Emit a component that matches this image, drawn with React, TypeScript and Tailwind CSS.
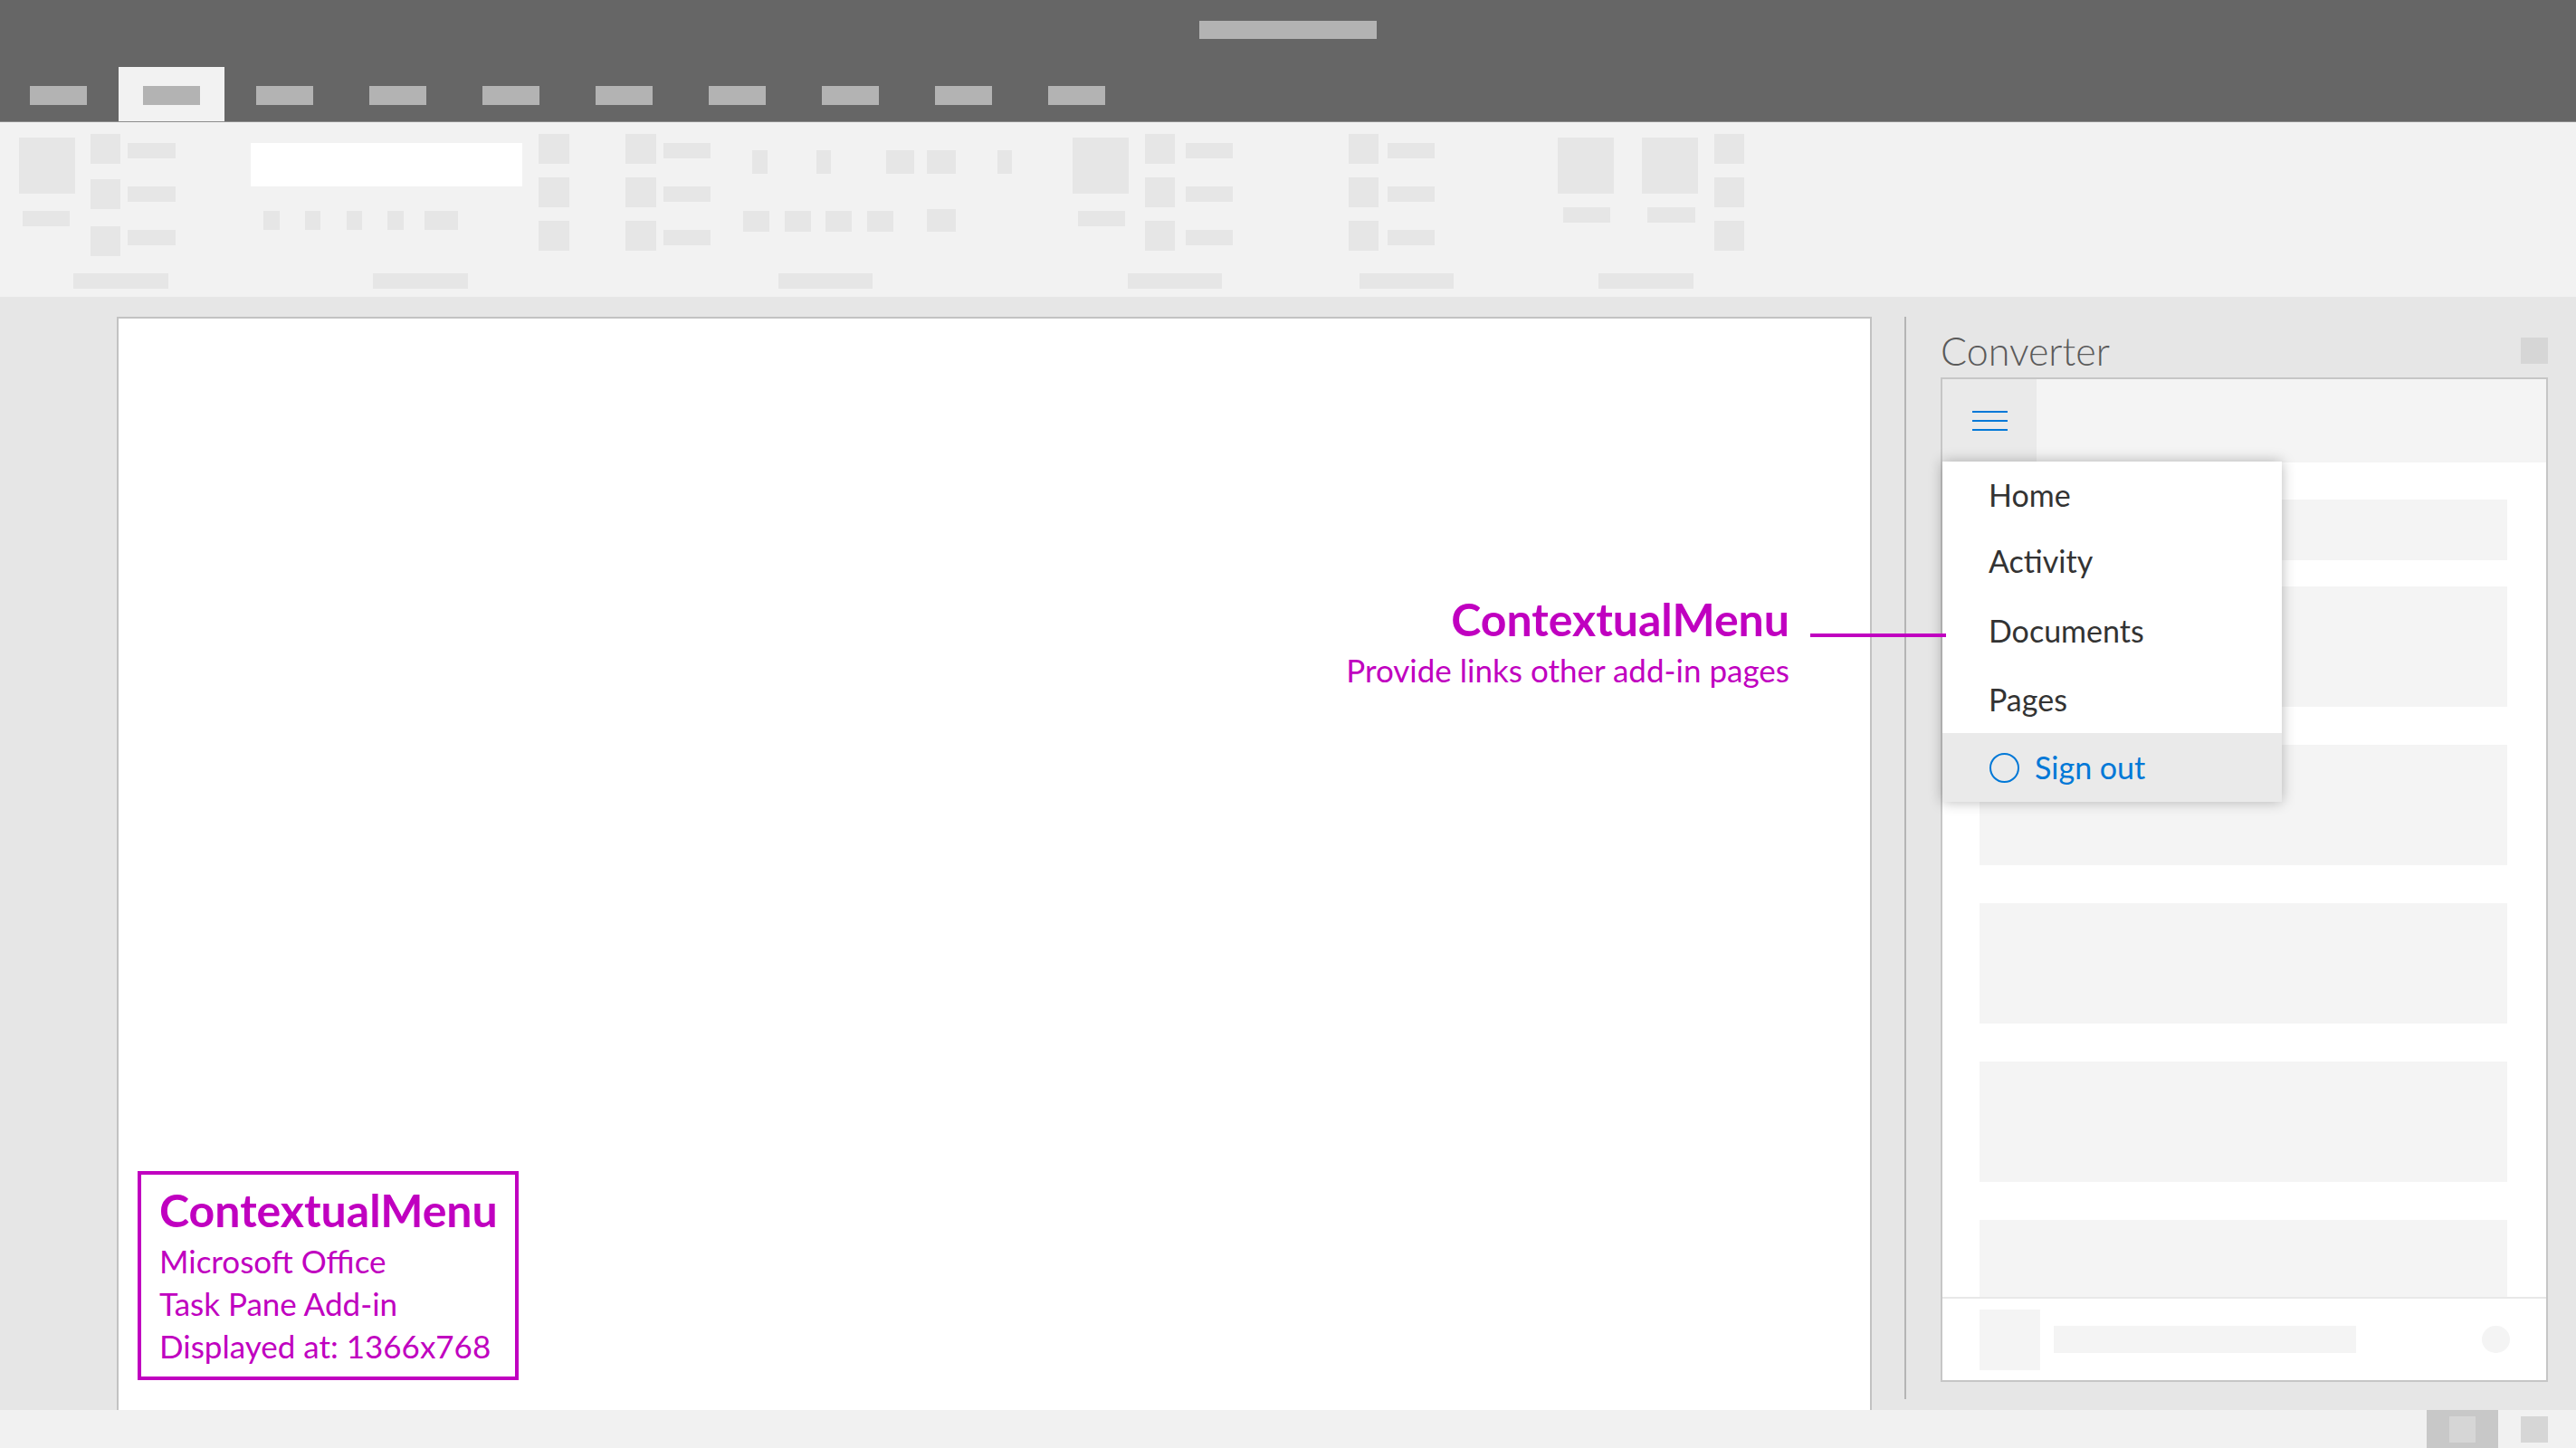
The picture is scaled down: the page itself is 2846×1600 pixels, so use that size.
const ph = "bg-[#e6e6e6]";

function TitleBar() {
  const tabs = [0, 1, 2, 3, 4, 5, 6, 7, 8, 9];
  return (
    <div className="h-[135px] bg-[#666666] border-b border-[#8c8c8c] flex flex-col">
      <div className="h-[74px] flex justify-center pt-[23px]">
        <div className="h-[20px] w-[196px] bg-[#b3b3b3]" />
      </div>
      <div className="flex pl-[2px] h-[60px]">
        {tabs.map((t) =>
          t === 1 ? (
            <div key={t} className="w-[125px] flex justify-center">
              <div className="w-[117px] h-full bg-[#f2f2f2] flex justify-center pt-[21px]">
                <div className="h-[21px] w-[63px] bg-[#b3b3b3]" />
              </div>
            </div>
          ) : (
            <div key={t} className="w-[125px] flex justify-center pt-[21px]">
              <div className="h-[21px] w-[63px] bg-[#b3b3b3]" />
            </div>
          )
        )}
      </div>
    </div>
  );
}

function Ribbon() {
  return (
    <div className="h-[193px] bg-[#f2f2f2] flex flex-col">
      <div className="h-[148px] flex items-start pt-[13px]">
        {/* group 1 */}
        <div className="ml-[21px] w-[62px] flex flex-col">
          <div className={`mt-[4px] h-[62px] w-[62px] ${ph}`} />
          <div className={`ml-[4px] mt-[19px] h-[17px] w-[52px] ${ph}`} />
        </div>
        <div className="ml-[17px] w-[33px] flex flex-col">
          <div className={`h-[33px] ${ph}`} />
          <div className={`mt-[17px] h-[33px] ${ph}`} />
          <div className={`mt-[19px] h-[33px] ${ph}`} />
        </div>
        <div className="ml-[8px] w-[53px] flex flex-col">
          <div className={`mt-[10px] h-[17px] ${ph}`} />
          <div className={`mt-[31px] h-[17px] ${ph}`} />
          <div className={`mt-[31px] h-[17px] ${ph}`} />
        </div>
        {/* group 2 */}
        <div className="ml-[83px] w-[300px] flex flex-col">
          <div className="mt-[10px] h-[48px] bg-white" />
          <div className="mt-[27px] flex">
            <div className={`ml-[14px] h-[21px] w-[18px] ${ph}`} />
            <div className={`ml-[28px] h-[21px] w-[17px] ${ph}`} />
            <div className={`ml-[29px] h-[21px] w-[17px] ${ph}`} />
            <div className={`ml-[28px] h-[21px] w-[18px] ${ph}`} />
            <div className={`ml-[23px] h-[21px] w-[37px] ${ph}`} />
          </div>
        </div>
        <div className="ml-[18px] w-[34px] flex flex-col gap-[15px]">
          <div className={`h-[33px] ${ph}`} />
          <div className={`h-[33px] ${ph}`} />
          <div className={`h-[33px] ${ph}`} />
        </div>
        {/* group 3 */}
        <div className="ml-[62px] w-[34px] flex flex-col gap-[15px]">
          <div className={`h-[33px] ${ph}`} />
          <div className={`h-[33px] ${ph}`} />
          <div className={`h-[33px] ${ph}`} />
        </div>
        <div className="ml-[8px] w-[52px] flex flex-col gap-[31px] pt-[10px]">
          <div className={`h-[17px] ${ph}`} />
          <div className={`h-[17px] ${ph}`} />
          <div className={`h-[17px] ${ph}`} />
        </div>
        <div className="ml-[36px] flex flex-col">
          <div className="mt-[18px] flex">
            <div className={`ml-[10px] h-[26px] w-[17px] ${ph}`} />
            <div className={`ml-[54px] h-[26px] w-[16px] ${ph}`} />
            <div className={`ml-[61px] h-[26px] w-[31px] ${ph}`} />
            <div className={`ml-[14px] h-[26px] w-[32px] ${ph}`} />
            <div className={`ml-[46px] h-[26px] w-[16px] ${ph}`} />
          </div>
          <div className="mt-[39px] flex items-start">
            <div className={`mt-[2px] h-[23px] w-[29px] ${ph}`} />
            <div className={`ml-[17px] mt-[2px] h-[23px] w-[29px] ${ph}`} />
            <div className={`ml-[16px] mt-[2px] h-[23px] w-[29px] ${ph}`} />
            <div className={`ml-[17px] mt-[2px] h-[23px] w-[29px] ${ph}`} />
            <div className={`ml-[37px] h-[25px] w-[32px] ${ph}`} />
          </div>
        </div>
        {/* group 4 */}
        <div className="ml-[67px] w-[62px] flex flex-col">
          <div className={`mt-[4px] h-[62px] w-[62px] ${ph}`} />
          <div className={`ml-[6px] mt-[19px] h-[17px] w-[52px] ${ph}`} />
        </div>
        <div className="ml-[18px] w-[33px] flex flex-col gap-[15px]">
          <div className={`h-[33px] ${ph}`} />
          <div className={`h-[33px] ${ph}`} />
          <div className={`h-[33px] ${ph}`} />
        </div>
        <div className="ml-[12px] w-[52px] flex flex-col gap-[31px] pt-[10px]">
          <div className={`h-[17px] ${ph}`} />
          <div className={`h-[17px] ${ph}`} />
          <div className={`h-[17px] ${ph}`} />
        </div>
        {/* group 5 */}
        <div className="ml-[128px] w-[33px] flex flex-col gap-[15px]">
          <div className={`h-[33px] ${ph}`} />
          <div className={`h-[33px] ${ph}`} />
          <div className={`h-[33px] ${ph}`} />
        </div>
        <div className="ml-[10px] w-[52px] flex flex-col gap-[31px] pt-[10px]">
          <div className={`h-[17px] ${ph}`} />
          <div className={`h-[17px] ${ph}`} />
          <div className={`h-[17px] ${ph}`} />
        </div>
        {/* group 6 */}
        <div className="ml-[136px] w-[62px] flex flex-col">
          <div className={`mt-[4px] h-[62px] w-[62px] ${ph}`} />
          <div className={`ml-[6px] mt-[15px] h-[17px] w-[52px] ${ph}`} />
        </div>
        <div className="ml-[31px] w-[62px] flex flex-col">
          <div className={`mt-[4px] h-[62px] w-[62px] ${ph}`} />
          <div className={`ml-[6px] mt-[15px] h-[17px] w-[53px] ${ph}`} />
        </div>
        <div className="ml-[18px] w-[33px] flex flex-col gap-[15px]">
          <div className={`h-[33px] ${ph}`} />
          <div className={`h-[33px] ${ph}`} />
          <div className={`h-[33px] ${ph}`} />
        </div>
      </div>
      <div className="mt-[19px] flex">
        <div className={`ml-[81px] h-[17px] w-[105px] ${ph}`} />
        <div className={`ml-[226px] h-[17px] w-[105px] ${ph}`} />
        <div className={`ml-[343px] h-[17px] w-[104px] ${ph}`} />
        <div className={`ml-[282px] h-[17px] w-[104px] ${ph}`} />
        <div className={`ml-[152px] h-[17px] w-[104px] ${ph}`} />
        <div className={`ml-[160px] h-[17px] w-[105px] ${ph}`} />
      </div>
    </div>
  );
}

function Page() {
  return (
    <div className="ml-[129px] mt-[22px] w-[1939px] border-2 border-b-0 border-[#c2c2c2] bg-white flex flex-col text-[#c000c0]">
      <div className="self-end mr-[89px] pt-[307px] flex flex-col items-end">
        <div className="text-[50px] leading-[50px] font-bold">ContextualMenu</div>
        <div className="mt-[14px] text-[35px] leading-[35px]">Provide links other add-in pages</div>
      </div>
      <div className="mt-auto mb-[33px] ml-[21px] w-[421px] h-[231px] border-4 border-[#c000c0] pl-[20px] pt-[14px]">
        <div className="text-[50px] leading-[50px] font-bold">ContextualMenu</div>
        <div className="mt-[8px] text-[35px] leading-[47px]">
          <div>Microsoft Office</div>
          <div>Task Pane Add-in</div>
          <div>Displayed at: 1366x768</div>
        </div>
      </div>
    </div>
  );
}

function ContextMenu() {
  const items = [
    { label: "Home", h: "h-[73px]" },
    { label: "Activity", h: "h-[74px]" },
    { label: "Documents", h: "h-[79px]" },
    { label: "Pages", h: "h-[74px]" },
  ];
  return (
    <div className="absolute left-0 top-[91px] w-[375px] bg-white shadow-[0_0_14px_rgba(0,0,0,0.28)] flex flex-col text-[34px] leading-none">
      {items.map((it) => (
        <div key={it.label} className={`${it.h} flex items-center pl-[51px] text-[#333333]`}>
          {it.label}
        </div>
      ))}
      <div className="h-[76px] flex items-center pl-[52px] bg-[#eaeaea] text-[#0078d7]">
        <div className="w-[33px] h-[33px] rounded-full border-2 border-[#0078d7]" />
        <span className="ml-[17px]">Sign out</span>
      </div>
    </div>
  );
}

function TaskPane() {
  return (
    <div className="ml-[38px] w-[671px] flex flex-col">
      <div className="h-[89px] flex items-start justify-between">
        <div className="mt-[38px] text-[43px] leading-none font-light text-[#5a5a5a]">Converter</div>
        <div className="mt-[45px] w-[30px] h-[29px] bg-[#d6d6d6]" />
      </div>
      <div className="relative h-[1110px] border-2 border-[#c6c6c6] bg-white flex flex-col">
        <div className="h-[92px] bg-[#f4f4f4] flex">
          <div className="w-[104px] h-full bg-[#eaeaea] flex flex-col items-center justify-center gap-[8px]">
            <div className="w-[39px] h-[2px] bg-[#0078d7]" />
            <div className="w-[39px] h-[2px] bg-[#0078d7]" />
            <div className="w-[39px] h-[2px] bg-[#0078d7]" />
          </div>
        </div>
        <div className="h-[922px] overflow-hidden pl-[41px] pr-[43px] flex flex-col">
          <div className="mt-[41px] h-[67px] shrink-0 bg-[#f4f4f4]" />
          <div className="mt-[29px] h-[133px] shrink-0 bg-[#f4f4f4]" />
          <div className="mt-[42px] h-[133px] shrink-0 bg-[#f4f4f4]" />
          <div className="mt-[42px] h-[133px] shrink-0 bg-[#f4f4f4]" />
          <div className="mt-[42px] h-[133px] shrink-0 bg-[#f4f4f4]" />
          <div className="mt-[42px] h-[85px] shrink-0 bg-[#f4f4f4]" />
        </div>
        <div className="h-[2px] bg-[#e8e8e8]" />
        <div className="flex-1 flex items-center pl-[41px] pr-[40px]">
          <div className="w-[67px] h-[67px] bg-[#f4f4f4]" />
          <div className="ml-[15px] w-[334px] h-[30px] bg-[#f4f4f4]" />
          <div className="ml-auto w-[31px] h-[30px] rounded-full bg-[#f4f4f4]" />
        </div>
        <ContextMenu />
      </div>
    </div>
  );
}

function StatusBar() {
  return (
    <div className="h-[42px] bg-[#f1f1f1] flex justify-end items-stretch pr-[31px]">
      <div className="w-[79px] bg-[#c8c8c8] flex items-center justify-center">
        <div className="w-[29px] h-[29px] bg-[#d6d6d6]" />
      </div>
      <div className="ml-[25px] flex items-center">
        <div className="w-[30px] h-[29px] bg-[#d6d6d6]" />
      </div>
    </div>
  );
}

export default function App() {
  return (
    <div className="relative w-[2846px] h-[1600px] overflow-hidden flex flex-col font-['Lato',sans-serif]">
      <TitleBar />
      <Ribbon />
      <div className="h-[1230px] bg-[#e6e6e6] flex">
        <Page />
        <div className="ml-[36px] mt-[22px] mb-[12px] w-[2px] bg-[#b5b5b5]" />
        <TaskPane />
      </div>
      <StatusBar />
      <div className="absolute left-[2000px] top-[700px] w-[150px] h-[4px] bg-[#c000c0]" />
    </div>
  );
}
